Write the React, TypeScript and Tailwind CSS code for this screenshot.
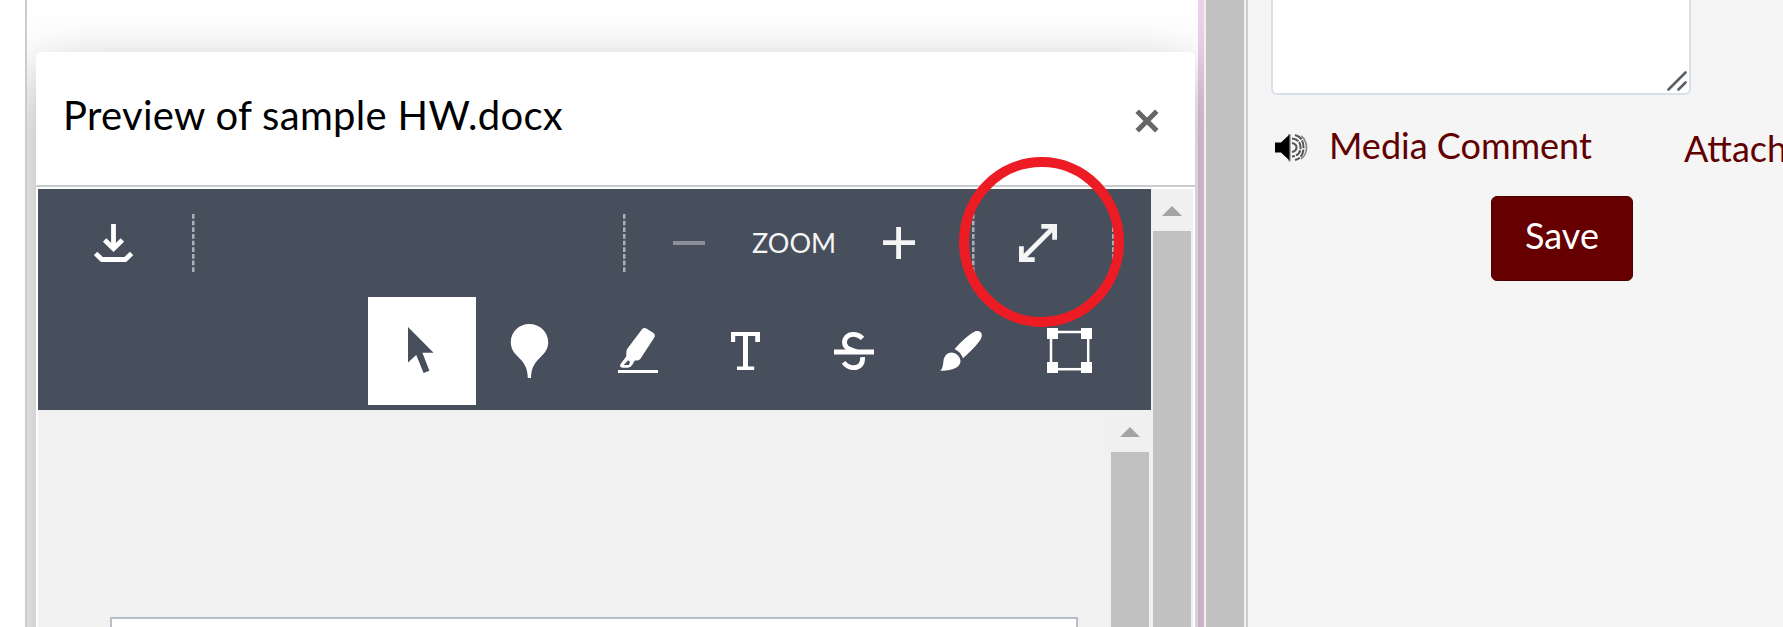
import React from "react";

const DashedDivider = ({ className }: { className: string }) => (
  <svg className={`h-[58px] w-[3px] shrink-0 ${className}`} viewBox="0 0 3 58">
    <line x1="1.25" y1="0" x2="1.25" y2="58" stroke="#abb0b6" strokeWidth="2.5" strokeDasharray="4.7 1.96" />
  </svg>
);

const DownloadIcon = () => (
  <svg className="h-[38px] w-[40px]" viewBox="94 224 40 38" fill="none" stroke="#fff" strokeWidth="4.8">
    <path d="M113.5 224V248" />
    <path d="M104.6 240L113.5 248.6L122.4 240" />
    <path d="M95.6 253.4L102 259.5H125.2L131.6 253.4" />
  </svg>
);

const ExpandIcon = () => (
  <svg className="h-[38px] w-[38px]" viewBox="0 0 38 38" fill="none" stroke="#f5f5f5" strokeWidth="4.8">
    <path d="M3 35L35 3" />
    <path d="M22.3 2.4H35.6V15.7" />
    <path d="M2.4 22.3V35.6H15.7" />
  </svg>
);

const ArrowUp = () => (
  <svg className="h-[10px] w-[20px]" viewBox="0 0 20 10">
    <path d="M0 10L10 0L20 10Z" fill="#a3a3a3" />
  </svg>
);

const Tool = ({ active, children }: { active?: boolean; children: React.ReactNode }) => (
  <button className={`flex h-[108px] w-[108px] shrink-0 items-center justify-center ${active ? "bg-white" : ""}`}>
    {children}
  </button>
);

const toolSvg = "h-[60px] w-[60px]";

const PointerIcon = () => (
  <svg className={toolSvg} viewBox="392 321 60 60">
    <path d="M408 327L433.6 352.8H422.4L429.4 370.8L423.6 373L416.2 355L408 362.6Z" fill="#484f5c" />
  </svg>
);
const PinIcon = () => (
  <svg className={toolSvg} viewBox="500 321 60 60">
    <path d="M529.3 324C519 324 510.8 332 510.8 342.2C510.8 348 513.5 352.3 517.5 356.2C523.5 362 527.6 367 527.8 378H531C531.2 367 535.4 362 541.3 356.2C545.4 352.3 548.2 348 548.2 342.2C548.2 332 539.8 324 529.3 324Z" fill="#fff" />
  </svg>
);
const HighlighterIcon = () => (
  <svg className={toolSvg} viewBox="608 321 60 60">
    <path d="M642 329.2Q644.2 327.2 646.8 328.7L653.4 333Q655.8 334.8 654.3 337.6L640.6 358.4Q639.3 360.4 637 360.4H634.8L632.2 364.9Q630.3 367.7 627.6 367.7H622.4Q619.2 367.2 620.4 364.2L626.2 356.6L626.4 352Q626.3 350.2 627.5 348.6ZM628.2 360.2L623.7 365H628.9L630 362Z" fill="#fff" fillRule="evenodd" />
    <rect x="618" y="370" width="40" height="3" fill="#fff" />
  </svg>
);
const TextIcon = () => (
  <svg className={toolSvg} viewBox="716 321 60 60">
    <path d="M731 332H760V342H755.2V336H748V366.4H754.2V370H737V366.4H743V336H735.2V342H731Z" fill="#fff" />
  </svg>
);
const StrikeIcon = () => (
  <svg className={toolSvg} viewBox="824 321 60 60" fill="none" stroke="#fff" strokeWidth="4.8">
    <path d="M862.5 338.4C857.5 333.4 850.2 333.2 846.6 337C842.8 341.4 844 347.6 850.5 349.6L857 352" />
    <path d="M843.6 362.4C848.4 368.6 856.5 369 860.2 365.3C862.3 363.2 862.8 360.4 862.6 357.2" />
    <path d="M834 352H874" strokeWidth="5.2" />
  </svg>
);
const BrushIcon = () => (
  <svg className={toolSvg} viewBox="932 321 60 60" fill="#fff">
    <path d="M954.6 349.3C961 341.5 969 334.2 975.4 331.3C978.2 330.3 981 331.4 981.7 334C982.2 336.7 981 339.2 978.8 342C974.3 347.8 969 353 963 358.2C961.4 354 958.7 351 954.6 349.3Z" />
    <path d="M940.3 370.8C943.2 368 943 363.5 943.6 360C944.6 355.6 947.7 352.4 952 352.6C957 353.2 960.5 357.3 960.5 361.6C960 367.8 951.4 371.3 940.3 370.8Z" />
  </svg>
);
const BoxIcon = () => (
  <svg className={toolSvg} viewBox="1040 321 60 60">
    <rect x="1051" y="332" width="37.2" height="37.2" fill="none" stroke="#fff" strokeWidth="2.5" />
    <path d="M1047 328h11v11h-11zM1081 328h11v11h-11zM1047 362h11v11h-11zM1081 362h11v11h-11z" fill="#fff" />
  </svg>
);

const SpeakerIcon = () => (
  <svg className="h-[32px] w-[34px] shrink-0" viewBox="0 0 34 32" fill="none">
    <path d="M14.500 2V29.500" stroke="#aaa" strokeWidth="3" />
    <path d="M0 10.500H6L14.500 2.500V28.500L6 20.500H0Z" fill="#000" />
    <g stroke="#555" strokeWidth="2">
      <path d="M17 11Q21.500 12 21.500 15.500T17 20" />
      <path d="M17 6.500Q25.500 7.500 25.500 15.500T17 24.500" strokeDasharray="7 1.2" />
      <path d="M20 3Q28.500 5 28.500 15.500T20 28" strokeDasharray="8 1.2" />
      <path d="M26 4Q31.500 8 31.500 15.500T26 27" stroke="#888" strokeWidth="1.600" />
    </g>
  </svg>
);

const Scrollbar = () => (
  <div className="flex w-[42px] shrink-0 flex-col items-center bg-[#f0f0f0]">
    <div className="h-[42px] shrink-0 pt-[17px]">
      <ArrowUp />
    </div>
    <div className="w-[38px] flex-1 bg-[#c1c1c1]" />
  </div>
);

const PreviewDialog = () => (
  <section className="relative z-10 ml-[9px] mt-[52px] flex h-[640px] w-[1159px] shrink-0 flex-col rounded-t-[5px] bg-white shadow-[0_22px_60px_rgba(0,0,0,0.35)]">
    <header className="flex h-[135px] shrink-0 items-center justify-between border-b-2 border-[#c7cdd1] pl-[27px] pr-9">
      <h1 className="pb-2 text-[40px] leading-[48px] tracking-[0.3px] text-black">Preview of sample HW.docx</h1>
      <svg className="mt-[4px] h-[24px] w-[24px]" viewBox="0 0 24 24" stroke="#666" strokeWidth="5">
        <path d="M2.200 2.200L21.800 21.800M21.800 2.200L2.200 21.800" />
      </svg>
    </header>
    <div className="flex min-h-0 flex-1 px-[2px] pt-[2px]">
      <div className="flex w-[1113px] shrink-0 flex-col">
        <div className="relative h-[221px] shrink-0 bg-[#484f5c]">
          <div className="flex h-[108px] items-center">
            <button className="ml-[56px] w-[40px]"><DownloadIcon /></button>
            <DashedDivider className="ml-[58px]" />
            <DashedDivider className="ml-[428px]" />
            <div className="ml-[47px] h-[4px] w-[32px] bg-[#8b8f99]" />
            <span className="ml-[47px] w-[85px] text-[27px] leading-8 text-[#f5f5f5]">ZOOM</span>
            <svg className="ml-[46px] h-[32px] w-[32px]" viewBox="0 0 32 32" stroke="#f5f5f5" strokeWidth="4.800">
              <path d="M0 15.600H32M15.600 0V32" />
            </svg>
            <DashedDivider className="ml-[57px]" />
            <button className="ml-[44px]"><ExpandIcon /></button>
            <DashedDivider className="ml-[55px]" />
          </div>
          <div className="flex pl-[330px]">
            <Tool active><PointerIcon /></Tool>
            <Tool><PinIcon /></Tool>
            <Tool><HighlighterIcon /></Tool>
            <Tool><TextIcon /></Tool>
            <Tool><StrikeIcon /></Tool>
            <Tool><BrushIcon /></Tool>
            <Tool><BoxIcon /></Tool>
          </div>
          <svg className="absolute left-[921px] top-[-32px] h-[170px] w-[165px]" viewBox="0 0 165 170">
            <ellipse cx="82.500" cy="85" rx="77.500" ry="80" fill="none" stroke="#ed1c24" strokeWidth="10" />
          </svg>
        </div>
        <div className="flex flex-1 bg-[#f1f1f1]">
          <div className="flex-1 pl-[72px] pt-[207px]">
            <div className="h-full w-[968px] border-2 border-b-0 border-[#b8bfc8] bg-white" />
          </div>
          <Scrollbar />
        </div>
      </div>
      <Scrollbar />
    </div>
  </section>
);

export default function App() {
  return (
    <div className="flex h-[627px] w-[1783px] overflow-hidden bg-white font-['Lato',sans-serif]">
      <main className="ml-[25px] flex w-[1179px] shrink-0 overflow-hidden border-l-2 border-[#c7cdd1]">
        <PreviewDialog />
        <div className="ml-[3px] w-[6px] shrink-0 bg-[#efcee9]" />
      </main>
      <div className="w-[42px] shrink-0 border-x-2 border-[#f0f0f0] bg-[#c1c1c1]" />
      <aside className="flex min-w-0 flex-1 flex-col border-l-2 border-[#c7cdd1] bg-[#f5f5f5] pl-[23px]">
        <div className="flex h-[95px] w-[420px] shrink-0 items-end justify-end rounded-b-md border-2 border-t-0 border-[#d9e0e7] bg-white p-[2px]">
          <svg className="h-[20px] w-[20px]" viewBox="0 0 20 20" stroke="#5c5f63" strokeWidth="2.600" strokeLinecap="round">
            <path d="M1.500 18.500L18.500 1.500M11.500 18.500L18.500 11.500" />
          </svg>
        </div>
        <div className="flex h-[101px] shrink-0 items-start whitespace-nowrap text-[36px] leading-[44px] text-[#610000]">
          <div className="ml-[4px] mt-[37px]"><SpeakerIcon /></div>
          <span className="ml-[20px] mt-[28px] w-[262px]">Media Comment</span>
          <span className="ml-[93px] mt-[31px]">Attach</span>
        </div>
        <button className="ml-[220px] flex h-[85px] w-[142px] shrink-0 items-center justify-center rounded-md border border-[#4f0000] bg-[#660000] pb-2 text-[36px] leading-[44px] text-white">
          Save
        </button>
      </aside>
    </div>
  );
}
